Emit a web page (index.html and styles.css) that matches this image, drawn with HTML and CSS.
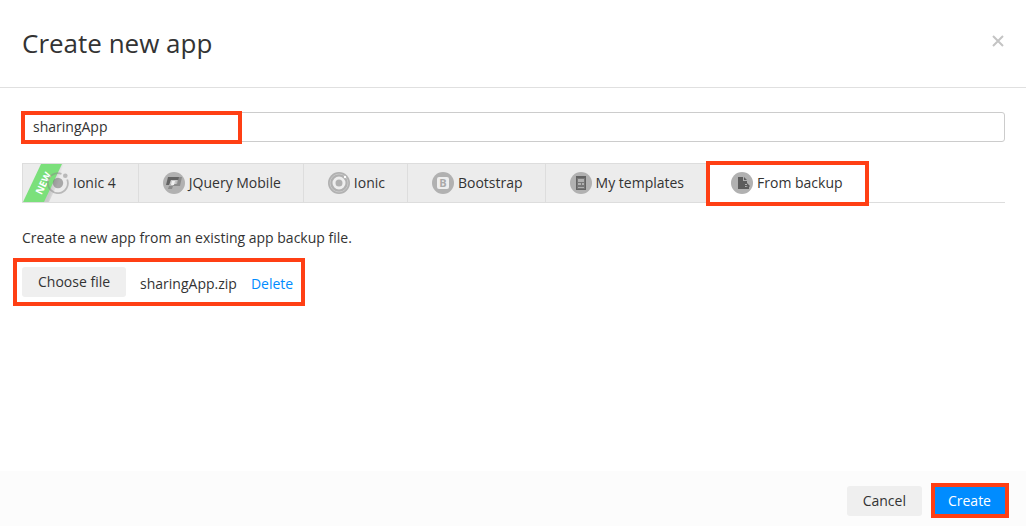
FILE: index.html
```html
<!DOCTYPE html>
<html lang="en">
<head>
    <meta charset="UTF-8">
    <meta name="viewport" content="width=device-width, initial-scale=1.0">
    <title>Create new app</title>
    <link rel="stylesheet" href="styles.css">
</head>
<body>
    <div class="dialog">
        <header class="dialog-header">
            <h1>Create new app</h1>
            <button type="button" class="close-button" aria-label="Close">
                <svg width="12" height="12" viewBox="0 0 12 12"><path d="M1 1l10 10M11 1L1 11" stroke="#c4c4c4" stroke-width="2"/></svg>
            </button>
        </header>

        <main class="dialog-body">
            <div class="name-field">
                <input type="text" class="name-input" value="sharingApp" aria-label="App name">
                <span class="highlight highlight-name"></span>
            </div>

            <nav class="tabs">
                <button type="button" class="tab">
                    <svg class="ribbon" width="46" height="38" viewBox="0 0 46 38" aria-hidden="true">
                        <defs>
                            <linearGradient id="ribbon-shade" x1="0" y1="0" x2="1" y2="0.4">
                                <stop offset="0.5" stop-color="#000" stop-opacity="0.15"/>
                                <stop offset="0.75" stop-color="#000" stop-opacity="0"/>
                            </linearGradient>
                        </defs>
                        <path d="M38 0h6L26 38h-6z" fill="url(#ribbon-shade)"/>
                        <path d="M18 0h21L21 38H0z" fill="#7be07b"/>
                        <text x="20" y="23" transform="rotate(-64 20 19)" text-anchor="middle" class="ribbon-text">NEW</text>
                    </svg>
                    <svg class="tab-icon" width="22" height="22" viewBox="0 0 22 22" aria-hidden="true">
                        <g opacity="0.5">
                            <path d="M14.5 1.8A10 10 0 1 0 20.2 7.5" fill="none" stroke="#888" stroke-width="1.8"/>
                            <circle cx="11" cy="11" r="5.2" fill="#666"/>
                            <circle cx="18.3" cy="3.7" r="2.3" fill="#888"/>
                        </g>
                    </svg>
                    Ionic 4
                </button>
                <button type="button" class="tab">
                    <svg class="tab-icon" width="22" height="22" viewBox="0 0 22 22" aria-hidden="true">
                        <circle cx="11" cy="11" r="11" fill="#b1b1b1"/>
                        <path d="M5 5h13v3H8l-2 5H3z" fill="#636363"/>
                        <path d="M16 5h3l-2 9h-7l1-2h3z" fill="#8b8b8b"/>
                        <path d="M8 8h6l-1 4H7z" fill="#c8c8c8"/>
                        <path d="M9 9h3l-1 4H8z" fill="#f0f0f0"/>
                        <path d="M6 14h4l-1 3H5z" fill="#8b8b8b"/>
                    </svg>
                    JQuery Mobile
                </button>
                <button type="button" class="tab">
                    <svg class="tab-icon" width="22" height="22" viewBox="0 0 22 22" aria-hidden="true">
                        <circle cx="11" cy="11" r="11" fill="#b1b1b1"/>
                        <circle cx="11" cy="11" r="9" fill="none" stroke="#c8c8c8"/>
                        <circle cx="11" cy="11" r="5" fill="none" stroke="#eee" stroke-width="3"/>
                        <circle cx="17" cy="5" r="1.2" fill="#fff"/>
                    </svg>
                    Ionic
                </button>
                <button type="button" class="tab">
                    <svg class="tab-icon" width="22" height="22" viewBox="0 0 22 22" aria-hidden="true">
                        <circle cx="11" cy="11" r="11" fill="#b1b1b1"/>
                        <rect x="5" y="5" width="12" height="12" rx="2" fill="#eee"/>
                        <text x="11" y="15" text-anchor="middle" class="bootstrap-letter">B</text>
                    </svg>
                    Bootstrap
                </button>
                <button type="button" class="tab">
                    <svg class="tab-icon" width="22" height="22" viewBox="0 0 22 22" aria-hidden="true">
                        <circle cx="11" cy="11" r="11" fill="#b1b1b1"/>
                        <rect x="6" y="4" width="10" height="14" fill="#636363"/>
                        <path d="M7 6h8v11H7z" fill="#777"/>
                        <path d="M8 7h6v3H8zM8 11h3v2H8zM12 11h2v2h-2zM8 15h6v1H8z" fill="#b0b0b0"/>
                    </svg>
                    My templates
                </button>
                <button type="button" class="tab tab-active">
                    <svg class="tab-icon" width="22" height="22" viewBox="0 0 22 22" aria-hidden="true">
                        <circle cx="11" cy="11" r="11" fill="#b1b1b1"/>
                        <path d="M7 5h5v4h4v3h-2v5H7z" fill="#5c5c5c"/>
                        <path d="M13 5l3 3h-3zM15 15h-1v2h4v-2l1-1-3-3v2h-2v1h3z" fill="#5c5c5c"/>
                    </svg>
                    From backup
                    <span class="highlight highlight-tab"></span>
                </button>
            </nav>

            <p class="hint">Create a new app from an existing app backup file.</p>

            <div class="file-row">
                <button type="button" class="button">Choose file</button>
                <span class="file-name">sharingApp.zip</span>
                <a href="#" class="delete-link">Delete</a>
                <span class="highlight highlight-file"></span>
            </div>
        </main>

        <footer class="dialog-footer">
            <button type="button" class="button">Cancel</button>
            <button type="button" class="button button-primary">Create</button>
        </footer>
    </div>
</body>
</html>
```
FILE: styles.css
```css
* {
    box-sizing: border-box;
}
body {
    margin: 0;
    background-color: #fff;
    color: #333;
    font-family: "Open Sans", "Noto Sans", sans-serif;
    font-size: 14px;
    line-height: 20px;
}
button,
input {
    font: inherit;
    color: inherit;
}
.dialog {
    display: flex;
    flex-direction: column;
    min-height: 100vh;
}

/* Header */
.dialog-header {
    display: flex;
    justify-content: space-between;
    align-items: center;
    padding: 23px 22px 24px;
    border-bottom: 1px solid #e0e0e0;
}
.dialog-header h1 {
    margin: 0;
    font-size: 26px;
    font-weight: normal;
    line-height: 40px;
}
.close-button {
    display: flex;
    padding: 0;
    margin-bottom: 4px;
    border: none;
    background: none;
    cursor: pointer;
}

/* Body */
.dialog-body {
    flex: 1;
    padding: 24px 21px 24px 22px;
}
.name-field {
    position: relative;
    margin-bottom: 21px;
}
.name-input {
    display: block;
    width: 100%;
    height: 30px;
    padding: 0 10px 2px;
    border: 1px solid #ccc;
    border-radius: 3px;
    background-color: #fff;
}

/* Tabs */
.tabs {
    display: flex;
    height: 40px;
    margin-bottom: 25px;
    border-bottom: 1px solid #ddd;
}
.tab {
    position: relative;
    display: flex;
    align-items: center;
    gap: 4px;
    padding: 0 22px 0 24px;
    border: 1px solid #ddd;
    border-width: 1px 0 0 1px;
    background-color: #ececec;
    white-space: nowrap;
    cursor: pointer;
}
.tab-active {
    height: 40px;
    padding-right: 26px;
    padding-bottom: 1px;
    background-color: #fff;
}
.tab-icon {
    position: relative;
    flex: none;
}
.ribbon {
    position: absolute;
    top: 0;
    left: 0;
}
.ribbon-text {
    fill: #fff;
    font-size: 10px;
    font-weight: bold;
}
.bootstrap-letter {
    fill: #aaa;
    font-size: 11px;
    font-weight: bold;
}

/* Backup file */
.hint {
    margin: 0 0 19px;
}
.file-row {
    position: relative;
    display: flex;
    align-items: flex-end;
    gap: 14px;
    width: max-content;
}
.file-name,
.delete-link {
    line-height: 26px;
}
.delete-link {
    color: #008cff;
    text-decoration: none;
}
.button {
    height: 30px;
    padding: 0 16px;
    border: none;
    border-radius: 3px;
    background-color: #efefef;
    cursor: pointer;
}

/* Footer */
.dialog-footer {
    display: flex;
    justify-content: flex-end;
    align-items: center;
    gap: 9px;
    padding: 12px 17px 8px;
    background-color: #fcfcfc;
}
.button-primary {
    height: 35px;
    padding: 0 14px 0 13px;
    border: 4px solid #ff3f14;
    border-radius: 0;
    background-color: #008cff;
    color: #fff;
}

/* Red callouts */
.highlight {
    position: absolute;
    border: 4px solid #ff3f14;
    pointer-events: none;
}
.highlight-name {
    top: -1px;
    left: -1px;
    width: 221px;
    height: 33px;
}
.highlight-tab {
    top: -3px;
    right: 0;
    bottom: -3px;
    left: -1px;
}
.highlight-file {
    top: -9px;
    right: -12px;
    bottom: -9px;
    left: -9px;
}
```
